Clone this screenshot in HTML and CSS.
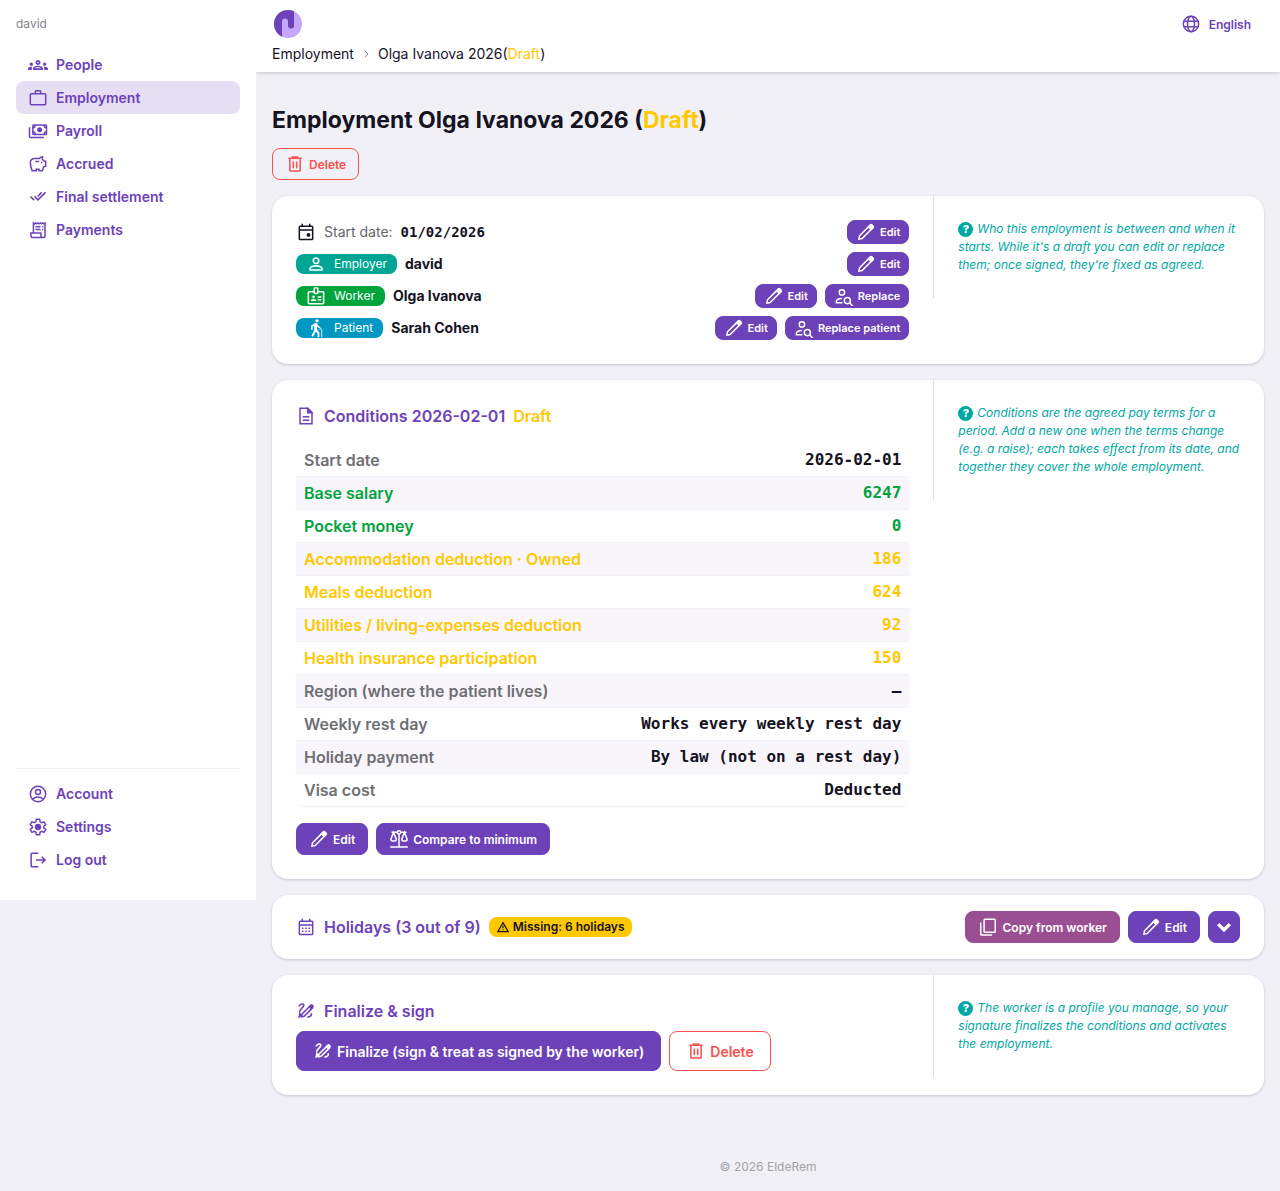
FILE: index.html
```html
<!DOCTYPE html>
<html lang="en">
<head>
    <meta charset="UTF-8">
    <meta name="viewport" content="width=device-width, initial-scale=1.0">
    <title>Employment Olga Ivanova 2026</title>
    <link rel="stylesheet" href="styles.css">
</head>
<body>
    <!-- icon set -->
    <svg class="sprite" aria-hidden="true">
        <symbol id="i-people" viewBox="0 0 24 24"><path fill="currentColor" stroke="none" d="M4 13c1.100 0 2-.9 2-2s-.9-2-2-2-2 .9-2 2 .9 2 2 2zm1.130 1.100c-.37-.06-.74-.1-1.130-.1-.99 0-1.930.21-2.780.58C.48 14.900 0 15.620 0 16.430V18h4.500v-1.610c0-.83.23-1.610.63-2.290zM20 13c1.100 0 2-.9 2-2s-.9-2-2-2-2 .9-2 2 .9 2 2 2zm4 3.430c0-.81-.48-1.530-1.220-1.850-.85-.37-1.790-.58-2.780-.58-.39 0-.76.04-1.130.1.4.68.63 1.460.63 2.290V18H24v-1.570zm-7.760-2.780c-1.170-.52-2.610-.9-4.240-.9s-3.070.39-4.240.9C6.680 14.130 6 15.210 6 16.390V18h12v-1.610c0-1.180-.68-2.260-1.760-2.740zM8.070 16c.09-.23.13-.39.91-.69.97-.38 1.990-.56 3.020-.56s2.050.18 3.020.56c.77.3.81.46.91.69H8.070zM12 8c.55 0 1 .45 1 1s-.45 1-1 1-1-.45-1-1 .45-1 1-1m0-2c-1.660 0-3 1.340-3 3s1.340 3 3 3 3-1.340 3-3-1.340-3-3-3z"/></symbol>
        <symbol id="i-work" viewBox="0 0 24 24"><rect x="2.800" y="6.800" width="18.400" height="13.400" rx="1.200"/><path d="M8.800 6.500V4.200q0-1 1-1h4.400q1 0 1 1v2.300"/></symbol>
        <symbol id="i-cash" viewBox="0 0 24 24"><rect x="5.800" y="4.800" width="16.400" height="11.400" rx="1"/><circle cx="14" cy="10.500" r="3" fill="currentColor" stroke="none"/><path d="M1.800 7.500v11.200q0 1 1 1H19M6 8q2.500 0 2.500-3M22 8q-2.500 0-2.500-3M6 13q2.500 0 2.500 3M22 13q-2.500 0-2.500 3"/></symbol>
        <symbol id="i-pig" viewBox="0 0 24 24"><path d="M5 20.200Q2.800 14.500 2.800 10.500 2.800 5.300 8 5.300h5.500q1.700-2 4-2-.6 1.500-.3 3l2.300 2.500h1.700v5.800l-2.500.9-1.500 4.700h-4v-2h-3.400v2z"/><path d="M9 9h4.500"/><circle cx="16.200" cy="10.300" r="1" fill="currentColor" stroke="none"/></symbol>
        <symbol id="i-checks" viewBox="-2 -1 28 28"><path d="M1.500 12.300 6.500 17.300M7 12l5 5L22.500 6.500M11.600 12.200 17 6.500" stroke-width="2.200"/></symbol>
        <symbol id="i-receipt" viewBox="0 0 24 24"><path d="M6.500 15.500V3.500l1.300 1 1.400-1 1.400 1 1.400-1 1.400 1 1.400-1 1.400 1 1.400-1 1.400 1 1.400-1V18.500q0 2.500-2.500 2.500H5.500q-2 0-2-2.500v-2.800H15.500V18.500q0 2.500 2.500 2.500M9 8h6M9 11.500h6M17 8h1.500M17 11.500h1.500"/></symbol>
        <symbol id="i-account" viewBox="0 0 24 24"><circle cx="12" cy="12" r="9.200"/><circle cx="12" cy="9.500" r="3"/><path d="M5.500 18.200Q8.500 15.500 12 15.500t6.500 2.700"/></symbol>
        <symbol id="i-gear" viewBox="0 0 24 24"><path d="M10 2.800h4l.5 3 2 1.100 2.800-1.100 2 3.400-2.400 1.900v2l2.400 1.900-2 3.400-2.800-1.100-2 1.100-.5 3h-4l-.5-3-2-1.100-2.800 1.100-2-3.400 2.400-1.900v-2L2.700 9.200l2-3.400 2.800 1.100 2-1.100z"/><circle cx="12" cy="12" r="3.800" fill="currentColor" stroke="none"/></symbol>
        <symbol id="i-logout" viewBox="0 0 24 24"><path d="M12.500 3.800H4.800q-1 0-1 1v14.400q0 1 1 1h7.700M9.500 12h11M16.500 8l4 4-4 4"/></symbol>
        <symbol id="i-globe" viewBox="0 0 24 24"><circle cx="12" cy="12" r="9.200"/><ellipse cx="12" cy="12" rx="4.200" ry="9.200"/><path d="M3.500 8.800h17M3.500 15.200h17"/></symbol>
        <symbol id="i-trash" viewBox="0 0 24 24"><path d="M5.800 5.500v14q0 1 1 1h10.400q1 0 1-1v-14M4 5h16M9 5V3.500h6V5M10 9v8M14 9v8"/></symbol>
        <symbol id="i-event" viewBox="0 0 24 24"><rect x="4" y="5" width="16" height="16" rx="1"/><path d="M4 9.500h16M7.500 2v3M16.500 2v3"/><circle cx="15" cy="15.500" r="2.300" fill="currentColor" stroke="none"/></symbol>
        <symbol id="i-calendar" viewBox="0 0 24 24"><rect x="4" y="5" width="16" height="16" rx="1"/><path d="M4 9.500h16M7.500 2v3M16.500 2v3M7.200 13.500H9M11.100 13.500h1.800M15 13.500h1.800M7.200 17.200H9M11.100 17.200h1.800M15 17.200h1.800"/></symbol>
        <symbol id="i-person" viewBox="0 0 24 24"><circle cx="12" cy="8" r="3.300"/><path d="M4.800 19.200v-1.600q0-1.400 1.500-2.100 5.700-2.500 11.400 0 1.500.7 1.500 2.100v1.600z"/></symbol>
        <symbol id="i-badge" viewBox="0 0 24 24"><path d="M9.500 7H3.800q-1 0-1 1v12.200q0 1 1 1h16.400q1 0 1-1V8q0-1-1-1h-5.700"/><rect x="9.800" y="2" width="4.400" height="7" rx="1.500"/><circle cx="9" cy="13" r="1.600" fill="currentColor" stroke="none"/><path fill="currentColor" stroke="none" d="M5.800 18v-.7q0-1.800 3.200-1.800t3.200 1.800v.7z"/><path d="M14 13.200h4.500M14 16.500h4.500"/></symbol>
        <symbol id="i-elder" viewBox="0 0 24 24"><circle cx="13.200" cy="3.400" r="2" fill="currentColor" stroke="none"/><path fill="currentColor" stroke="none" d="M11.500 5.800 6 9.200V14h2v-3.600l1.800-1V15L6.500 21.300 8.300 22.600 12 16.200l2 2.600V23h2v-5.500l-2.800-4V10.300q1.500 2 4 2.300v-1.900q-2.200-.5-3.100-2.700-.8-2.200-2.600-2.200z"/><path d="M16.500 14q0-1.200 1.200-1.200t1.200 1.200v9" stroke-width="1"/></symbol>
        <symbol id="i-edit" viewBox="0 0 24 24"><path d="M3.500 20.500 4.200 16.600 16.400 4.400l3.200 3.200L7.400 19.800z"/><path fill="currentColor" d="m15 5.800 2.200-2.200q1-1 2 0l1.200 1.200q1 1 0 2L18.200 9z"/></symbol>
        <symbol id="i-replace" viewBox="0 -1 24 24"><circle cx="9.500" cy="6.700" r="3.200"/><path d="M10 19H2.800v-1.700q0-1.400 1.500-2.100 2.500-1.100 5-1.100"/><circle cx="16" cy="16.500" r="3.700"/><path d="m18.800 19.300 3.700 3.700"/></symbol>
        <symbol id="i-doc" viewBox="0 0 24 24"><path d="M4.800 2.800h9.400l5 5v13.400H4.800zM8 13h8M8 17h8"/><path fill="currentColor" d="M14 3v5h5z"/></symbol>
        <symbol id="i-scale" viewBox="0 0 24 24"><path d="M1.500 21.500h21M12 6v15M3 4h6.500M14.500 4H21M5.500 4 2.300 12.200q0 2.300 3.200 2.300t3.200-2.300zM18.500 4l-3.200 8.200q0 2.300 3.200 2.300t3.200-2.300z"/><circle cx="12" cy="4" r="2"/></symbol>
        <symbol id="i-warn" viewBox="1 2 22 20"><path d="M12 4 21.500 20.500h-19zM12 9.500v5M12 16v2" stroke-width="2.200"/></symbol>
        <symbol id="i-copy" viewBox="0 0 24 24"><rect x="7.300" y="2.800" width="13.400" height="15.600" rx="1"/><path d="M3.300 6.500v14.200q0 1 1 1H17"/></symbol>
        <symbol id="i-sign" viewBox="-1.500 -1 28 28"><path d="M2.500 6.500Q5 2.500 7.800 3.300t1 3.500L4.300 12q-1 1.200-.4 2.400M6 21.200l.8-3.800L18.200 6l3 3L9.800 20.400zM14.500 21.200q3.500.4 5.300-2.200 1-1.700-.7-2.800" stroke-width="2.200"/><path fill="currentColor" d="m17 7.200 2.500-2.500q.8-.8 1.600 0l1.200 1.200q.8.8 0 1.600L20 10zM2.800 21.400l1-5.400 2 3.500z"/></symbol>
        <symbol id="i-down" viewBox="0 0 24 24"><path d="m5 8.500 7 7 7-7" stroke-width="4"/></symbol>
        <symbol id="i-right" viewBox="0 0 24 24"><path d="m8 2 10 10L8 22"/></symbol>
    </svg>

    <div class="layout">
        <aside class="sidebar">
            <div class="user">david</div>
            <ul class="menu">
                <li><a href="#"><svg class="icon"><use href="#i-people"/></svg>People</a></li>
                <li><a href="#" class="active"><svg class="icon"><use href="#i-work"/></svg>Employment</a></li>
                <li><a href="#"><svg class="icon"><use href="#i-cash"/></svg>Payroll</a></li>
                <li><a href="#"><svg class="icon"><use href="#i-pig"/></svg>Accrued</a></li>
                <li><a href="#"><svg class="icon"><use href="#i-checks"/></svg>Final settlement</a></li>
                <li><a href="#"><svg class="icon"><use href="#i-receipt"/></svg>Payments</a></li>
            </ul>
            <ul class="menu menu-bottom">
                <li><a href="#"><svg class="icon"><use href="#i-account"/></svg>Account</a></li>
                <li><a href="#"><svg class="icon"><use href="#i-gear"/></svg>Settings</a></li>
                <li><a href="#"><svg class="icon"><use href="#i-logout"/></svg>Log out</a></li>
            </ul>
        </aside>

        <div class="page">
            <header class="topbar">
                <div class="topbar-row">
                    <a href="#" class="logo" aria-label="Home">
                        <svg viewBox="0 0 32 32">
                            <circle cx="16" cy="16" r="14" fill="#c4a7fb"/>
                            <path fill="#6d42b9" d="M22 3.350V17.500a3 3 0 0 1-6 0V13.500a3 3 0 0 0-6 0V28.650A14 14 0 0 1 22 3.350z"/>
                        </svg>
                    </a>
                    <button type="button" class="lang"><svg class="icon"><use href="#i-globe"/></svg>English</button>
                </div>
                <nav class="crumbs">
                    <a href="#">Employment</a>
                    <svg class="crumb-sep"><use href="#i-right"/></svg>
                    <a href="#">Olga Ivanova 2026(<span class="draft">Draft</span>)</a>
                </nav>
            </header>

            <main>
                <h1>Employment Olga Ivanova 2026 (<span class="draft">Draft</span>)</h1>
                <button type="button" class="btn btn-sm btn-error"><svg class="icon"><use href="#i-trash"/></svg>Delete</button>

                <section class="card split">
                    <div class="card-body rows">
                        <div class="row">
                            <svg class="icon"><use href="#i-event"/></svg>
                            <span class="muted">Start date:</span>
                            <span class="date">01/02/2026</span>
                            <div class="actions">
                                <button type="button" class="btn btn-xs"><svg class="icon"><use href="#i-edit"/></svg>Edit</button>
                            </div>
                        </div>
                        <div class="row">
                            <span class="badge badge-employer"><svg class="icon"><use href="#i-person"/></svg>Employer</span>
                            <b>david</b>
                            <div class="actions">
                                <button type="button" class="btn btn-xs"><svg class="icon"><use href="#i-edit"/></svg>Edit</button>
                            </div>
                        </div>
                        <div class="row">
                            <span class="badge badge-worker"><svg class="icon"><use href="#i-badge"/></svg>Worker</span>
                            <b>Olga Ivanova</b>
                            <div class="actions">
                                <button type="button" class="btn btn-xs"><svg class="icon"><use href="#i-edit"/></svg>Edit</button>
                                <button type="button" class="btn btn-xs"><svg class="icon"><use href="#i-replace"/></svg>Replace</button>
                            </div>
                        </div>
                        <div class="row">
                            <span class="badge badge-patient"><svg class="icon"><use href="#i-elder"/></svg>Patient</span>
                            <b>Sarah Cohen</b>
                            <div class="actions">
                                <button type="button" class="btn btn-xs"><svg class="icon"><use href="#i-edit"/></svg>Edit</button>
                                <button type="button" class="btn btn-xs"><svg class="icon"><use href="#i-replace"/></svg>Replace patient</button>
                            </div>
                        </div>
                    </div>
                    <p class="help"><span class="help-mark">?</span>Who this employment is between and when it starts. While it's a draft you can edit or replace them; once signed, they're fixed as agreed.</p>
                </section>

                <section class="card split">
                    <div class="card-body">
                        <h2><svg class="icon"><use href="#i-doc"/></svg>Conditions 2026-02-01 <span class="draft">Draft</span></h2>
                        <table class="terms">
                            <tbody>
                                <tr><th scope="row">Start date</th><td>2026-02-01</td></tr>
                                <tr class="plus"><th scope="row">Base salary</th><td>6247</td></tr>
                                <tr class="plus"><th scope="row">Pocket money</th><td>0</td></tr>
                                <tr class="minus"><th scope="row">Accommodation deduction · Owned</th><td>186</td></tr>
                                <tr class="minus"><th scope="row">Meals deduction</th><td>624</td></tr>
                                <tr class="minus"><th scope="row">Utilities / living-expenses deduction</th><td>92</td></tr>
                                <tr class="minus"><th scope="row">Health insurance participation</th><td>150</td></tr>
                                <tr><th scope="row">Region (where the patient lives)</th><td>—</td></tr>
                                <tr><th scope="row">Weekly rest day</th><td>Works every weekly rest day</td></tr>
                                <tr><th scope="row">Holiday payment</th><td>By law (not on a rest day)</td></tr>
                                <tr><th scope="row">Visa cost</th><td>Deducted</td></tr>
                            </tbody>
                        </table>
                        <div class="buttons">
                            <button type="button" class="btn btn-sm"><svg class="icon"><use href="#i-edit"/></svg>Edit</button>
                            <button type="button" class="btn btn-sm"><svg class="icon"><use href="#i-scale"/></svg>Compare to minimum</button>
                        </div>
                    </div>
                    <p class="help"><span class="help-mark">?</span>Conditions are the agreed pay terms for a period. Add a new one when the terms change (e.g. a raise); each takes effect from its date, and together they cover the whole employment.</p>
                </section>

                <section class="card holidays">
                    <h2><svg class="icon"><use href="#i-calendar"/></svg>Holidays (3 out of 9) <span class="missing"><svg><use href="#i-warn"/></svg>Missing: 6 holidays</span></h2>
                    <div class="buttons">
                        <button type="button" class="btn btn-sm btn-copy"><svg class="icon"><use href="#i-copy"/></svg>Copy from worker</button>
                        <button type="button" class="btn btn-sm"><svg class="icon"><use href="#i-edit"/></svg>Edit</button>
                        <button type="button" class="btn btn-sm btn-square" aria-label="Expand"><svg class="icon"><use href="#i-down"/></svg></button>
                    </div>
                </section>

                <section class="card split">
                    <div class="card-body finalize">
                        <h2><svg class="icon"><use href="#i-sign"/></svg>Finalize &amp; sign</h2>
                        <div class="buttons">
                            <button type="button" class="btn"><svg class="icon"><use href="#i-sign"/></svg>Finalize (sign &amp; treat as signed by the worker)</button>
                            <button type="button" class="btn btn-error"><svg class="icon"><use href="#i-trash"/></svg>Delete</button>
                        </div>
                    </div>
                    <p class="help"><span class="help-mark">?</span>The worker is a profile you manage, so your signature finalizes the conditions and activates the employment.</p>
                </section>
            </main>

            <footer>© 2026 EldeRem</footer>
        </div>
    </div>
</body>
</html>
```
FILE: styles.css
```css
* {
    box-sizing: border-box;
}

body {
    margin: 0;
    background: #f2f0f7;
    color: #15131f;
    font-family: Inter, "Liberation Sans", sans-serif;
    font-size: 14px;
    line-height: 20px;
}

h1, h2, p, ul {
    margin: 0;
    padding: 0;
}

a {
    color: inherit;
    text-decoration: none;
}

button {
    font-family: inherit;
    cursor: pointer;
}

.sprite {
    display: none;
}

svg {
    fill: none;
    stroke: currentColor;
    stroke-width: 1.8;
    flex-shrink: 0;
}

.icon {
    width: 20px;
    height: 20px;
}

.draft {
    color: #ffc800;
}

.layout {
    display: flex;
    align-items: flex-start;
    min-height: 100vh;
}

/* sidebar */
.sidebar {
    display: flex;
    flex-direction: column;
    width: 256px;
    min-height: 900px;
    flex-shrink: 0;
    padding: 0 16px 24px;
    background: #fefefe;
    z-index: 1;
}

.user {
    height: 48px;
    line-height: 48px;
    font-size: 12px;
    color: #85858a;
}

.menu {
    list-style: none;
}

.menu a {
    display: flex;
    align-items: center;
    gap: 8px;
    height: 33px;
    padding: 0 12px;
    border-radius: 8px;
    color: #6d42b9;
    font-weight: 600;
}

.menu a.active {
    background: #e6dff3;
}

.menu-bottom {
    margin-top: auto;
    padding-top: 8px;
    border-top: 1px solid #f2f0f7;
}

/* top bar */
.page {
    display: flex;
    flex-direction: column;
    flex: 1;
    min-width: 0;
    min-height: 100vh;
}

.topbar {
    padding: 8px 16px 4px;
    background: #fefefe;
    box-shadow: 0 1px 3px rgba(24, 24, 60, 0.2);
}

.topbar-row {
    display: flex;
    align-items: center;
    justify-content: space-between;
    height: 32px;
}

.logo svg {
    display: block;
    width: 32px;
    height: 32px;
    stroke: none;
}

.lang {
    display: flex;
    align-items: center;
    gap: 8px;
    padding: 0 13px;
    border: 0;
    background: none;
    color: #6d42b9;
    font-size: 12px;
    font-weight: 600;
}

.crumbs {
    display: flex;
    align-items: center;
    height: 28px;
}

.crumb-sep {
    width: 8px;
    height: 8px;
    margin: 0 8px;
    color: #8c8c94;
    stroke-width: 3;
}

/* main */
main {
    display: flex;
    flex-direction: column;
    align-items: flex-start;
    gap: 16px;
    padding: 32px 16px;
}

h1 {
    font-size: 23px;
    line-height: 32px;
    font-weight: 700;
}

h1 + .btn {
    margin-top: -4px;
}

h2 {
    display: flex;
    align-items: center;
    gap: 8px;
    color: #6d42b9;
    font-size: 16px;
    line-height: 24px;
    font-weight: 600;
}

.card {
    width: 100%;
    background: #fefefe;
    border-radius: 16px;
    box-shadow: 0 1px 3px rgba(24, 24, 60, 0.2);
}

.split {
    display: grid;
    grid-template-columns: 2fr 1fr;
    align-items: start;
}

.card-body {
    padding: 24px;
}

.rows {
    display: grid;
    gap: 8px;
}

.row {
    display: flex;
    align-items: center;
    gap: 8px;
    height: 24px;
}

.row b {
    font-weight: 700;
}

.muted {
    color: #65656a;
}

.date {
    font-family: "DejaVu Sans Mono", monospace;
    font-weight: 700;
}

.actions {
    display: flex;
    gap: 8px;
    margin-left: auto;
}

.buttons {
    display: flex;
    gap: 8px;
}

.btn {
    display: inline-flex;
    align-items: center;
    justify-content: center;
    gap: 4px;
    height: 40px;
    padding: 0 16px;
    border: 1px solid #6d42b9;
    border-radius: 8px;
    background: #6d42b9;
    color: #fff;
    font-size: 14px;
    font-weight: 600;
}

.btn-sm {
    height: 32px;
    padding: 0 12px;
    font-size: 12px;
}

.btn-xs {
    height: 24px;
    padding: 0 8px;
    font-size: 11px;
}

.btn-error {
    background: transparent;
    border-color: #f8514f;
    color: #f8514f;
}

.btn-copy {
    background: #9b4f93;
    border-color: #9b4f93;
}

.btn-square {
    width: 32px;
    padding: 0;
}

.badge {
    display: inline-flex;
    align-items: center;
    gap: 8px;
    height: 20px;
    padding: 0 10px;
    border-radius: 8px;
    color: #fff;
    font-size: 12px;
}

.badge-employer {
    background: #00a593;
}

.badge-worker {
    background: #00a43c;
}

.badge-patient {
    background: #0098c2;
}

.help {
    padding: 24px;
    border-left: 1px solid #dedee3;
    color: #00a8a4;
    font-size: 12px;
    line-height: 18px;
    font-style: italic;
}

.help-mark {
    display: inline-block;
    width: 15px;
    height: 15px;
    margin-right: 4px;
    border-radius: 50%;
    background: #00a8a4;
    color: #fff;
    font-size: 11px;
    line-height: 15px;
    font-style: normal;
    font-weight: 800;
    text-align: center;
}

/* conditions table */
.terms {
    width: 100%;
    margin: 16px 0;
    border-spacing: 0;
    font-size: 16px;
    line-height: 24px;
}

.terms th,
.terms td {
    padding: 4px 8px;
    border-bottom: 1px solid #f2f0f7;
}

.terms th {
    color: #6f6f74;
    font-weight: 600;
    text-align: left;
}

.terms td {
    font-family: "DejaVu Sans Mono", monospace;
    font-weight: 700;
    text-align: right;
}

.terms tr:nth-child(even) {
    background: #f8f6fb;
}

.terms tr:last-child th {
    border-bottom-left-radius: 8px;
}

.terms tr:last-child td {
    border-bottom-right-radius: 8px;
}

.terms .plus th,
.terms .plus td {
    color: #00a43c;
}

.terms .minus th,
.terms .minus td {
    color: #ffc800;
}

.holidays {
    display: flex;
    align-items: center;
    justify-content: space-between;
    padding: 16px 24px;
}

.missing {
    display: inline-flex;
    align-items: center;
    gap: 4px;
    height: 20px;
    padding: 0 8px;
    border-radius: 8px;
    background: #ffc800;
    color: #15131f;
    font-size: 12px;
}

.missing svg {
    width: 12px;
    height: 12px;
}

.finalize {
    display: grid;
    gap: 8px;
}

footer {
    margin-top: auto;
    padding: 16px;
    color: #a3a2a8;
    font-size: 12px;
    line-height: 16px;
    text-align: center;
}
```
